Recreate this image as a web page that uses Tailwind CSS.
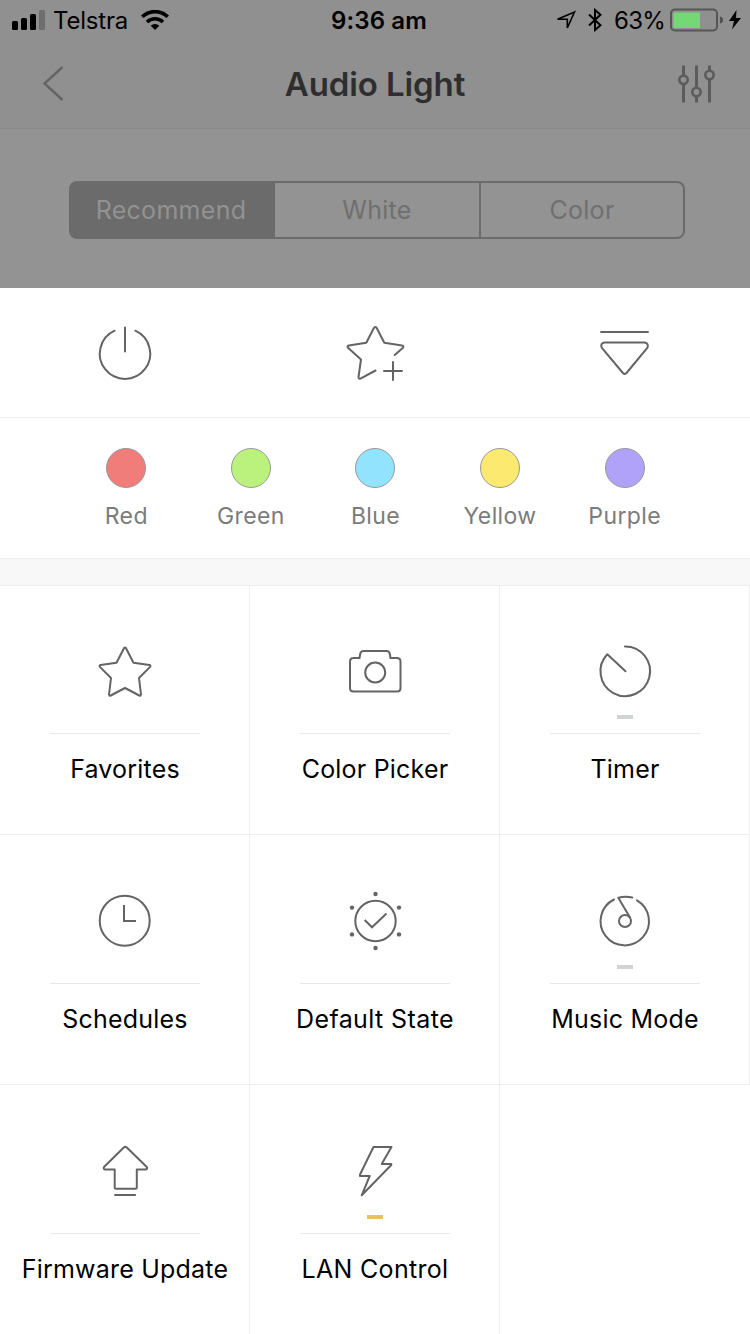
<!DOCTYPE html>
<html lang="en">
  <head>
    <meta charset="UTF-8" />
    <meta name="viewport" content="width=device-width, initial-scale=1.0" />
    <script src="https://cdn.jsdelivr.net/npm/@tailwindcss/browser@4"></script>
    <title>Audio Light</title>
  </head>
  <body
    class="w-[750px] h-[1334px] overflow-hidden bg-[#939393] font-['Inter','Liberation_Sans',sans-serif] text-black"
  >
    <!-- Header, dimmed behind the sheet -->
    <header class="h-[129px] bg-[#909090] border-b border-[#8a8a8a]">
      <div class="grid grid-cols-3 items-center h-10 text-[24px] leading-[26px]">
        <div class="flex items-center pl-3">
          <svg class="w-[33px] h-5" viewBox="0 0 33 20">
            <rect y="11" width="6" height="9" rx="1.5" />
            <rect x="9" y="8" width="6" height="12" rx="1.5" />
            <rect x="18" y="4" width="6" height="16" rx="1.5" />
            <rect x="27" width="6" height="20" rx="1.5" fill="#6e6e6e" />
          </svg>
          <span class="ml-2 w-[75px] pt-px whitespace-nowrap tracking-[-0.2px]">Telstra</span>
          <svg class="ml-[13px] w-7 h-5" viewBox="0 0 28 20">
            <g fill="none" stroke="#000" stroke-width="3.6">
              <path d="M1.2 6.8a18.4 18.4 0 0 1 25.6 0" />
              <path d="M6 12a11.6 11.6 0 0 1 16 0" />
            </g>
            <path d="M14 20l-4.3-4.3a6.2 6.2 0 0 1 8.6 0z" />
          </svg>
        </div>
        <div class="text-center font-semibold pl-2 pt-px tracking-[0.1px]">9:36 am</div>
        <div class="flex items-center justify-end pr-[9px]">
          <svg class="w-5 h-5" viewBox="0 0 20 20" fill="none" stroke="#000" stroke-width="1.6">
            <path d="M1.500 9.200L18.500 2 11.300 18V9.200z" />
          </svg>
          <svg class="ml-3 w-[14px] h-6" viewBox="0 0 14 24" fill="none" stroke="#000" stroke-width="2">
            <path d="M1 6.500l11.500 10.700L7 22V2l5.500 4.800L1 17.500" />
          </svg>
          <span class="ml-3 w-[52px] pt-px whitespace-nowrap tracking-[-0.7px]">63%</span>
          <svg class="ml-1 w-[54px] h-6" viewBox="0 0 54 24">
            <rect x="1" y="1.500" width="46" height="21" rx="4" fill="none" stroke="#555" stroke-width="2" />
            <rect x="3.500" y="4.500" width="26.500" height="15.500" rx="1" fill="#74d874" />
            <path d="M50 8.500q3 .8 3 3.500t-3 3.500z" fill="#4f4f4f" />
          </svg>
          <svg class="ml-[5px] w-3 h-5" viewBox="0 0 12 20">
            <path d="M7.500 0L0 11h5L3 19.500 12 8H7z" />
          </svg>
        </div>
      </div>
      <div class="grid grid-cols-[1fr_2fr_1fr] items-center h-[88px]">
        <svg class="ml-[42px] w-6 h-9" viewBox="0 0 24 36" fill="none" stroke="#646464" stroke-width="2.4">
          <path d="M20.500 1L2.500 17.500l18 16.500" />
        </svg>
        <h1 class="text-center text-[33px] leading-none font-semibold text-[#2e2e2e] tracking-[-0.1px]">
          Audio Light
        </h1>
        <svg class="justify-self-end mr-8 w-10 h-10" viewBox="0 0 40 40" fill="none" stroke="#5c5c5c" stroke-width="3">
          <path d="M5.500 1.500V11M5.500 20v18.500M18.500 1.500V23.500M18.500 32v6.500M31.500 1.500V6.500M31.500 15v23.500" />
          <circle cx="5.500" cy="15.800" r="4.200" stroke-width="2.600" />
          <circle cx="18.500" cy="28" r="4.200" stroke-width="2.600" />
          <circle cx="31.500" cy="11" r="4.200" stroke-width="2.600" />
        </svg>
      </div>
    </header>

    <div class="h-[159px] pt-[52px] pl-[69px]">
      <div
        class="grid grid-cols-3 w-[616px] h-[58px] rounded-lg border-2 border-[#6b6b6b] text-[25px] leading-[54px] text-center text-[#6f6f6f] tracking-[0.3px]"
      >
        <div class="bg-[#6b6b6b] text-[#929292] pr-1">Recommend</div>
        <div>White</div>
        <div class="border-l-2 border-[#6b6b6b]">Color</div>
      </div>
    </div>

    <!-- Sheet -->
    <main class="bg-white">
      <div class="grid grid-cols-3 justify-items-center h-[130px] pt-[25px] border-b border-[#ededed]">
        <svg class="size-20" viewBox="0 0 80 80" fill="none" stroke="#646464" stroke-width="2" stroke-linecap="round">
          <path d="M29.700 17.700a25.200 25.200 0 1 0 20.600 0M40 14.500V38.500" />
        </svg>
        <svg class="size-20" viewBox="0 0 80 80" fill="none" stroke="#646464" stroke-width="2" stroke-linecap="round" stroke-linejoin="round">
          <path d="M59.700 42l8.300-7.300q1.200-1.700-1-2.200l-17.700-2.700-7.600-14.800q-1.400-1.800-2.800 0l-7.600 14.800L13.800 32.500q-2 .6-.8 2.300L26 46.500l-2.500 17.500q0 2.200 2 1.600l15-8.100" />
          <path d="M58 49v18M49 58h18" />
        </svg>
        <svg class="size-20" viewBox="0 0 80 80" fill="none" stroke="#646464" stroke-width="2" stroke-linejoin="round">
          <path d="M15.300 19h48.400" />
          <path d="M19.500 29.500h40q4.500 1 3 5.200L41.500 60q-1.800 1.700-3.600 0L16.700 34.700q-1.700-4.200 2.800-5.200z" />
        </svg>
      </div>

      <div
        class="grid grid-cols-5 justify-items-center h-[140px] pl-16 pr-[63px] pt-[30px] text-[23px] leading-8 tracking-[0.4px] text-[#7b7b7b]"
      >
        <div class="flex flex-col items-center gap-3">
          <span class="size-10 rounded-full border border-[#999] bg-[#f07d7a]"></span>
          Red
        </div>
        <div class="flex flex-col items-center gap-3">
          <span class="size-10 rounded-full border border-[#999] bg-[#bbf27e]"></span>
          Green
        </div>
        <div class="flex flex-col items-center gap-3">
          <span class="size-10 rounded-full border border-[#999] bg-[#92e3fd]"></span>
          Blue
        </div>
        <div class="flex flex-col items-center gap-3">
          <span class="size-10 rounded-full border border-[#999] bg-[#fbe970]"></span>
          Yellow
        </div>
        <div class="flex flex-col items-center gap-3">
          <span class="size-10 rounded-full border border-[#999] bg-[#b0a2f8]"></span>
          Purple
        </div>
      </div>

      <div class="h-7 bg-[#f8f8f8] border-y border-[#ededed]"></div>

      <div class="grid grid-cols-3 grid-rows-[249px_250px_250px] text-[25px] leading-8 tracking-[0.2px]">
        <div class="flex flex-col items-center justify-end pl-px pb-[49px] border-r border-b border-[#efefef]">
          <svg class="size-20" viewBox="0 0 80 80" fill="none" stroke="#646464" stroke-width="2" stroke-linejoin="round">
            <path d="M39 17.200q1-1.400 2 0l7.500 14.500 16 2.200q1.600.6.600 2L54 47l2 16.500q-.2 1.600-1.700 1L40 57l-14.300 7.500q-1.500.6-1.700-1L26 47 14.900 35.900q-1-1.400.6-2l16-2.200z" />
          </svg>
          <span class="mt-1 w-4 h-1"></span>
          <hr class="mt-[14px] w-[150px] border-[#e8e8e8]" />
          <span class="mt-[19px]">Favorites</span>
        </div>
        <div class="flex flex-col items-center justify-end pl-px pb-[49px] border-r border-b border-[#efefef]">
          <svg class="size-20" viewBox="0 0 80 80" fill="none" stroke="#646464" stroke-width="2">
            <path d="M18 27h6.500l.7-4q.5-3 3.300-3h23q2.800 0 3.300 3l.7 4H62q3.500 0 3.500 3.500v26.500q0 3.500-3.500 3.500H18.500q-3.500 0-3.500-3.500V30.500Q15 27 18.500 27" />
            <circle cx="40.200" cy="41.500" r="10" />
          </svg>
          <span class="mt-1 w-4 h-1"></span>
          <hr class="mt-[14px] w-[150px] border-[#e8e8e8]" />
          <span class="mt-[19px]">Color Picker</span>
        </div>
        <div class="flex flex-col items-center justify-end pl-px pb-[49px] border-r border-b border-[#efefef]">
          <svg class="size-20" viewBox="0 0 80 80" fill="none" stroke="#646464" stroke-width="2" stroke-linecap="round" stroke-linejoin="round">
            <path d="M40 15.500A24.800 24.800 0 1 1 22.300 23.200L40.500 40.300" />
          </svg>
          <span class="mt-1 w-4 h-1 bg-[#d2d3d6]"></span>
          <hr class="mt-[14px] w-[150px] border-[#e8e8e8]" />
          <span class="mt-[19px]">Timer</span>
        </div>

        <div class="flex flex-col items-center justify-end pl-px pb-[49px] border-r border-b border-[#efefef]">
          <svg class="size-20" viewBox="0 0 80 80" fill="none" stroke="#646464" stroke-width="2">
            <circle cx="39.700" cy="39.700" r="25" />
            <path d="M39 24v16h12" />
          </svg>
          <span class="mt-1 w-4 h-1"></span>
          <hr class="mt-[14px] w-[150px] border-[#e8e8e8]" />
          <span class="mt-[19px]">Schedules</span>
        </div>
        <div class="flex flex-col items-center justify-end pl-px pb-[49px] border-r border-b border-[#efefef]">
          <svg class="size-20" viewBox="0 0 80 80" fill="none" stroke="#646464" stroke-width="2">
            <circle cx="40.500" cy="40" r="20.200" />
            <path d="M29.700 39l7.300 7.300 14.500-13.800" />
            <g fill="#646464" stroke="none">
              <circle cx="40.500" cy="13" r="2.200" />
              <circle cx="40.500" cy="67" r="2.200" />
              <circle cx="17" cy="26.600" r="2.200" />
              <circle cx="64" cy="26.600" r="2.200" />
              <circle cx="17" cy="53.400" r="2.200" />
              <circle cx="64" cy="53.400" r="2.200" />
            </g>
          </svg>
          <span class="mt-1 w-4 h-1"></span>
          <hr class="mt-[14px] w-[150px] border-[#e8e8e8]" />
          <span class="mt-[19px] tracking-[0.4px]">Default State</span>
        </div>
        <div class="flex flex-col items-center justify-end pl-px pb-[49px] border-r border-b border-[#efefef]">
          <svg class="size-20" viewBox="0 0 80 80" fill="none" stroke="#646464" stroke-width="2" stroke-linecap="round" stroke-linejoin="round">
            <path d="M29 18.500a24.200 24.200 0 1 0 23 .8M47.300 16.500q-7-1.500-14 .2L44.700 36" />
            <circle cx="40" cy="40" r="6" />
          </svg>
          <span class="mt-1 w-4 h-1 bg-[#d2d3d6]"></span>
          <hr class="mt-[14px] w-[150px] border-[#e8e8e8]" />
          <span class="mt-[19px]">Music Mode</span>
        </div>

        <div class="flex flex-col items-center justify-end pl-px pb-[50px] border-r border-[#efefef]">
          <svg class="size-20" viewBox="0 0 80 80" fill="none" stroke="#646464" stroke-width="2" stroke-linejoin="round">
            <path d="M38.800 16.500q1.500-1.200 3 0l20 19.500q1 2.200-1 2.500h-9v17.700q0 1.500-1.500 1.500H31.200q-1.500 0-1.500-1.500V38.500H20q-2-.3-1-2.500z" />
            <path d="M29.300 64h21.500" />
          </svg>
          <span class="mt-1 w-4 h-1"></span>
          <hr class="mt-[14px] w-[150px] border-[#e8e8e8]" />
          <span class="mt-[19px]">Firmware Update</span>
        </div>
        <div class="flex flex-col items-center justify-end pl-px pb-[50px] border-r border-[#efefef]">
          <svg class="size-20" viewBox="0 0 80 80" fill="none" stroke="#646464" stroke-width="2" stroke-linejoin="round">
            <path d="M38.500 16H56.500L46.700 33h9.600v1L26.700 64.300l8-19.300H25v-1.500z" />
          </svg>
          <span class="mt-1 w-4 h-1 bg-[#ecc060]"></span>
          <hr class="mt-[14px] w-[150px] border-[#e8e8e8]" />
          <span class="mt-[19px] tracking-[0.3px]">LAN Control</span>
        </div>
      </div>
    </main>
  </body>
</html>
